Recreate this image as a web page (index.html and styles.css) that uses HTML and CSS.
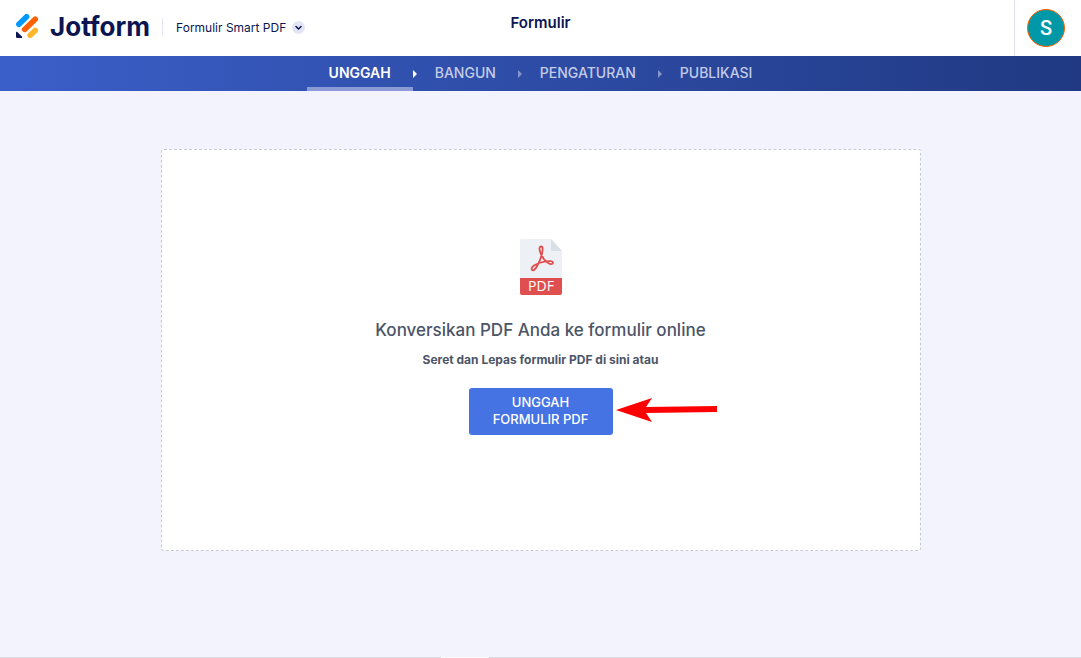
FILE: index.html
```html
<!DOCTYPE html>
<html lang="id">
<head>
    <meta charset="UTF-8">
    <meta name="viewport" content="width=device-width, initial-scale=1.0">
    <title>Formulir Smart PDF</title>
    <link rel="stylesheet" href="styles.css">
</head>
<body>
    <header class="header">
        <div class="header-left">
            <a class="logo" href="#" aria-label="Jotform">
                <svg class="logo-mark" width="22" height="24" viewBox="0 0 22 24">
                    <g fill="none" stroke-width="5.6" stroke-linecap="round">
                        <path d="M2.9 10.3L10.6 2.8" stroke="#0099ff"/>
                        <path d="M8.6 15.4L19.2 5.2" stroke="#ff6100"/>
                        <path d="M14.2 21.2L19.2 16.4" stroke="#ffb629"/>
                    </g>
                    <path d="M0 18.4c0-.8.8-1 1.3-.5l4.6 4.5c.7.7.3 1.6-.5 1.6H1.2C.5 24 0 23.5 0 22.8z" fill="#0a1551"/>
                </svg>
                <span class="logo-text">Jotform</span>
            </a>
            <button class="product-menu" type="button">
                Formulir Smart PDF
                <svg width="13" height="13" viewBox="0 0 13 13">
                    <circle cx="6.5" cy="6.5" r="6.5" fill="#e3e5f5"/>
                    <path d="M4 5.5L6.5 8L9 5.5" fill="none" stroke="#0a1551" stroke-width="1.5" stroke-linecap="round"/>
                </svg>
            </button>
        </div>
        <h1 class="page-title">Formulir</h1>
        <div class="account">
            <button class="avatar" type="button">S</button>
        </div>
    </header>

    <nav class="steps">
        <a class="step active" href="#">UNGGAH</a>
        <a class="step" href="#">BANGUN</a>
        <a class="step" href="#">PENGATURAN</a>
        <a class="step" href="#">PUBLIKASI</a>
    </nav>

    <main class="content">
        <section class="dropzone">
            <svg class="pdf-icon" width="42" height="56" viewBox="0 0 42 56">
                <path d="M1 0H31L42 12V39H0V1Q0 0 1 0z" fill="#edf1f5"/>
                <path d="M31 0L42 12H32Q31 12 31 11z" fill="#d8dfe6"/>
                <path d="M0 39H42V54Q42 56 40 56H2Q0 56 0 54z" fill="#e04f50"/>
                <path d="M21.2 7.5c-1.9 0-2 2.400-1.2 5 1.2 4.2 4.3 9 8.5 11.8 2.1 1.4 4.500 1.1 4.500-.5 0-1.8-3.500-1.9-7-1.500-4.500.5-8.500 2-11.500 4-2.400 1.6-3.500 3.500-2.500 4.700 1.2 1.300 3.400-.8 5-3.700 2.200-4 4.400-9.300 5.200-13.800.7-3.600.7-6-1-6z" fill="none" stroke="#e04f50" stroke-width="1.800"/>
                <text class="pdf-label" x="21" y="52" text-anchor="middle">PDF</text>
            </svg>
            <h2 class="dropzone-title">Konversikan PDF Anda ke formulir online</h2>
            <p class="dropzone-text">Seret dan Lepas formulir PDF di sini atau</p>
            <div class="upload">
                <button class="upload-button" type="button">UNGGAH FORMULIR PDF</button>
                <svg class="pointer" width="102" height="26" viewBox="0 0 102 26">
                    <path d="M0 13L36 1L30 10L101 9V15L30 16L36 25z" fill="#ff0000"/>
                </svg>
            </div>
        </section>
    </main>

    <footer class="footer">
        <span class="footer-tab"></span>
    </footer>
</body>
</html>
```

FILE: styles.css
```css
* {
    box-sizing: border-box;
}
body {
    margin: 0;
    min-height: 100vh;
    display: flex;
    flex-direction: column;
    font-family: Inter, "Liberation Sans", sans-serif;
    background-color: #f3f3fe;
    color: #0a1551;
}
button {
    font-family: inherit;
    border: none;
    cursor: pointer;
}
a {
    text-decoration: none;
}

/* Header */
.header {
    display: grid;
    grid-template-columns: 1fr auto 1fr;
    height: 56px;
    background-color: #ffffff;
}
.header-left {
    display: flex;
    align-items: center;
    padding-left: 16px;
    padding-bottom: 4px;
}
.logo {
    display: flex;
    align-items: center;
    gap: 12px;
    padding-right: 12px;
    color: #0a1551;
}
.logo-text {
    padding-top: 2px;
    font-size: 26px;
    font-weight: 700;
    line-height: 32px;
}
.product-menu {
    display: flex;
    align-items: center;
    gap: 6px;
    height: 18px;
    margin-top: 2px;
    padding: 0 0 0 13px;
    border-left: 1px solid #e3e5f5;
    background: none;
    color: #0a1551;
    font-size: 12px;
    white-space: nowrap;
}
.page-title {
    margin: 0;
    padding-top: 12px;
    font-size: 15px;
    font-weight: 600;
    line-height: 22px;
}
.account {
    display: flex;
    align-items: center;
    justify-self: end;
    padding: 0 16px 0 12px;
    border-left: 1px solid #dfe0e6;
}
.avatar {
    width: 38px;
    height: 38px;
    padding: 0;
    border: 1px solid #ff6100;
    border-radius: 50%;
    background-color: #0097a7;
    color: #ffffff;
    font-family: Roboto, sans-serif;
    font-size: 20px;
    font-weight: 500;
}

/* Steps */
.steps {
    display: flex;
    justify-content: center;
    height: 35px;
    background: linear-gradient(to right, #3b5fc9, #203982);
}
.step {
    position: relative;
    padding: 0 22px;
    color: #c3cce8;
    font-size: 14px;
    font-weight: 500;
    line-height: 34px;
}
.step.active {
    color: #ffffff;
    font-weight: 600;
    border-bottom: 4px solid #8c9bd6;
}
.step:not(:last-child)::after {
    content: "";
    position: absolute;
    top: 14px;
    left: 100%;
    border: 4px solid transparent;
    border-left-color: #8495cb;
    border-right: none;
}
.step.active::after {
    border-left-color: #ffffff;
}

/* Upload area */
.content {
    flex: 1;
    padding: 58px 24px;
}
.dropzone {
    display: flex;
    flex-direction: column;
    align-items: center;
    max-width: 760px;
    margin: 0 auto;
    padding: 89px 24px 115px;
    border: 1px dashed #c8cad4;
    border-radius: 3px;
    background-color: #ffffff;
    text-align: center;
}
.pdf-label {
    fill: #ffffff;
    font-family: "Open Sans", sans-serif;
    font-size: 14px;
    font-weight: 400;
}
.dropzone-title {
    margin: 23px 0 0;
    color: #4c5567;
    font-size: 17px;
    font-weight: 500;
    line-height: 24px;
}
.dropzone-text {
    margin: 8px 0 0;
    color: #4c5567;
    font-size: 12px;
    font-weight: 700;
    line-height: 20px;
}
.upload {
    position: relative;
    margin-top: 18px;
}
.upload-button {
    display: block;
    width: 144px;
    padding: 6px 20px 7px;
    border-radius: 3px;
    background-color: #4573e3;
    color: #ffffff;
    font-size: 13px;
    font-weight: 500;
    line-height: 17px;
}
.pointer {
    position: absolute;
    top: 9px;
    left: 147px;
}

/* Footer */
.footer {
    display: flex;
    justify-content: center;
    height: 1px;
    background-color: #dadbe3;
}
.footer-tab {
    width: 48px;
    margin-right: 151px;
    background-color: #fafaff;
}
```
